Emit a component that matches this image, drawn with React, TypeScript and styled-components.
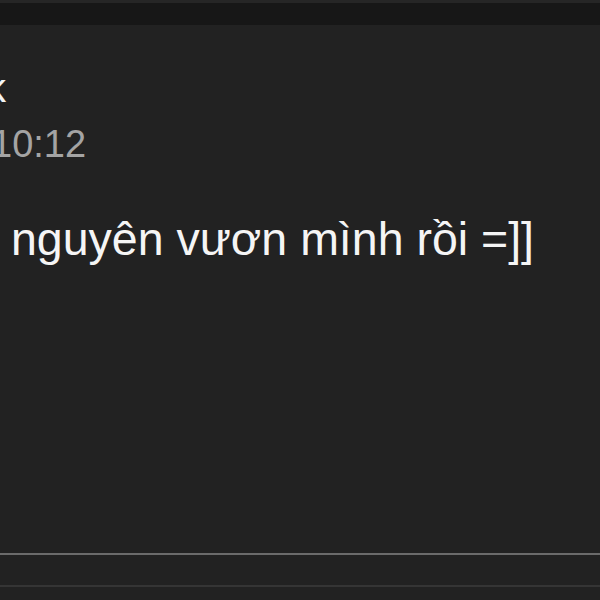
import React from "react";
import styled, { createGlobalStyle } from "styled-components";

const Global = createGlobalStyle`
  html, body { margin: 0; padding: 0; background: #222222; overflow: hidden; }
  body { font-family: "Liberation Sans", Arial, sans-serif; }
`;

const Screen = styled.div`
  width: 600px;
  height: 600px;
  display: flex;
  flex-direction: column;
  background: #222222;
  overflow: hidden;
`;

const TopBar = styled.div`
  height: 22px;
  flex: none;
  background: #171717;
  border-top: 3px solid #262626;
`;

const Message = styled.div`
  display: flex;
  flex-direction: column;
  padding-top: 39px;
  flex: 1;
`;

const Sender = styled.div`
  font-size: 40px;
  line-height: 48px;
  color: #f4f4f4;
  margin-left: -14px;
  white-space: nowrap;
`;

const Time = styled.div`
  margin-top: 11px;
  font-size: 38px;
  line-height: 42px;
  color: #a4a4a4;
  margin-left: -9px;
  white-space: nowrap;
`;

const Body = styled.div`
  margin-top: 46px;
  font-size: 46.5px;
  line-height: 56px;
  color: #f5f5f5;
  padding-left: 11px;
  white-space: nowrap;
`;

const Divider = styled.div<{ $color: string; $gap: number }>`
  height: 2px;
  flex: none;
  background: ${(p) => p.$color};
  margin-bottom: ${(p) => p.$gap}px;
`;

export default function App() {
  return (
    <>
      <Global />
      <Screen>
        <TopBar />
        <Message>
          <Sender>k</Sender>
          <Time>10:12</Time>
          <Body>nguyên vươn mình rồi =]]</Body>
        </Message>
        <Divider $color="#6b6b6b" $gap={30} />
        <Divider $color="#353535" $gap={13} />
      </Screen>
    </>
  );
}
